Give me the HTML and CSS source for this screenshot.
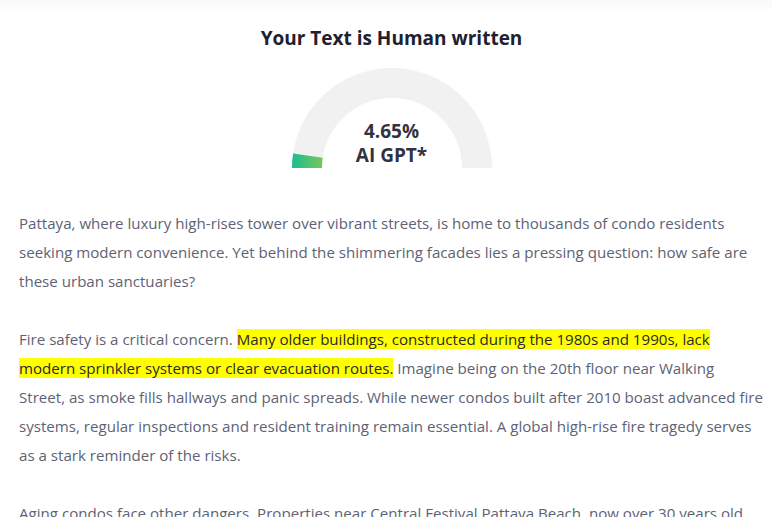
FILE: index.html
```html
<!DOCTYPE html>
<html lang="en">
<head>
<meta charset="utf-8">
<title>Result</title>
<link rel="stylesheet" href="styles.css">
</head>
<body>
<div class="page">
  <section class="result">
    <h2 class="result-title">Your Text is Human written</h2>
    <div class="gauge">
      <svg class="gauge-svg" width="200" height="101" viewBox="0 0 200 101">
        <defs>
          <linearGradient id="g" x1="0" y1="0" x2="32" y2="0" gradientUnits="userSpaceOnUse">
            <stop offset="0" stop-color="#16bf91"/>
            <stop offset="1" stop-color="#80c459"/>
          </linearGradient>
        </defs>
        <path d="M15 100 A85 85 0 0 1 185 100" fill="none" stroke="#f1f1f1" stroke-width="30"/>
        <path d="M15 100 A85 85 0 0 1 15.9 87.63" fill="none" stroke="url(#g)" stroke-width="30"/>
      </svg>
      <div class="gauge-label">
        <div>4.65%</div>
        <div>AI GPT*</div>
      </div>
    </div>
  </section>
  <article class="text">
    <p>Pattaya, where luxury high-rises tower over vibrant streets, is home to thousands of condo residents seeking modern convenience. Yet behind the shimmering facades lies a pressing question: how safe are these urban sanctuaries?</p>
    <p>Fire safety is a critical concern. <span class="hl">Many older buildings, constructed during the 1980s and 1990s, lack modern sprinkler systems or clear evacuation routes.</span> Imagine being on the 20th floor near Walking Street, as smoke fills hallways and panic spreads. While newer condos built after 2010 boast advanced fire systems, regular inspections and resident training remain essential. A global high-rise fire tragedy serves as a stark reminder of the risks.</p>
    <p>Aging condos face other dangers. Properties near Central Festival Pattaya Beach, now over 30 years old, often struggle with outdated wiring, worn elevators and crumbling balconies that demand urgent attention.</p>
  </article>
</div>
</body>
</html>
```
FILE: styles.css
```css
html, body {
  margin: 0;
  padding: 0;
  background: #ffffff;
}
body {
  font-family: "Open Sans", "Noto Sans", sans-serif;
  background: linear-gradient(#f9f9f9, #ffffff 14px) no-repeat;
}
.page {
  padding: 24px 8px 0 19px;
}
.result {
  display: flex;
  flex-direction: column;
  align-items: center;
}
.result-title {
  margin: 0;
  font-size: 19px;
  line-height: 28px;
  font-weight: 700;
  color: #202030;
}
.gauge {
  position: relative;
  width: 200px;
  height: 101px;
  margin-top: 16px;
}
.gauge-svg {
  display: block;
}
.gauge-label {
  position: absolute;
  left: 0;
  right: 0;
  top: 51px;
  text-align: center;
  font-size: 19px;
  line-height: 24px;
  font-weight: 700;
  color: #33333f;
}
.text {
  margin-top: 40px;
}
.text p {
  margin: 0 0 29px;
  font-size: 15.1px;
  line-height: 29px;
  color: #5d6275;
}
.hl {
  background: #ffff00;
  color: #2a2a2a;
}
```
